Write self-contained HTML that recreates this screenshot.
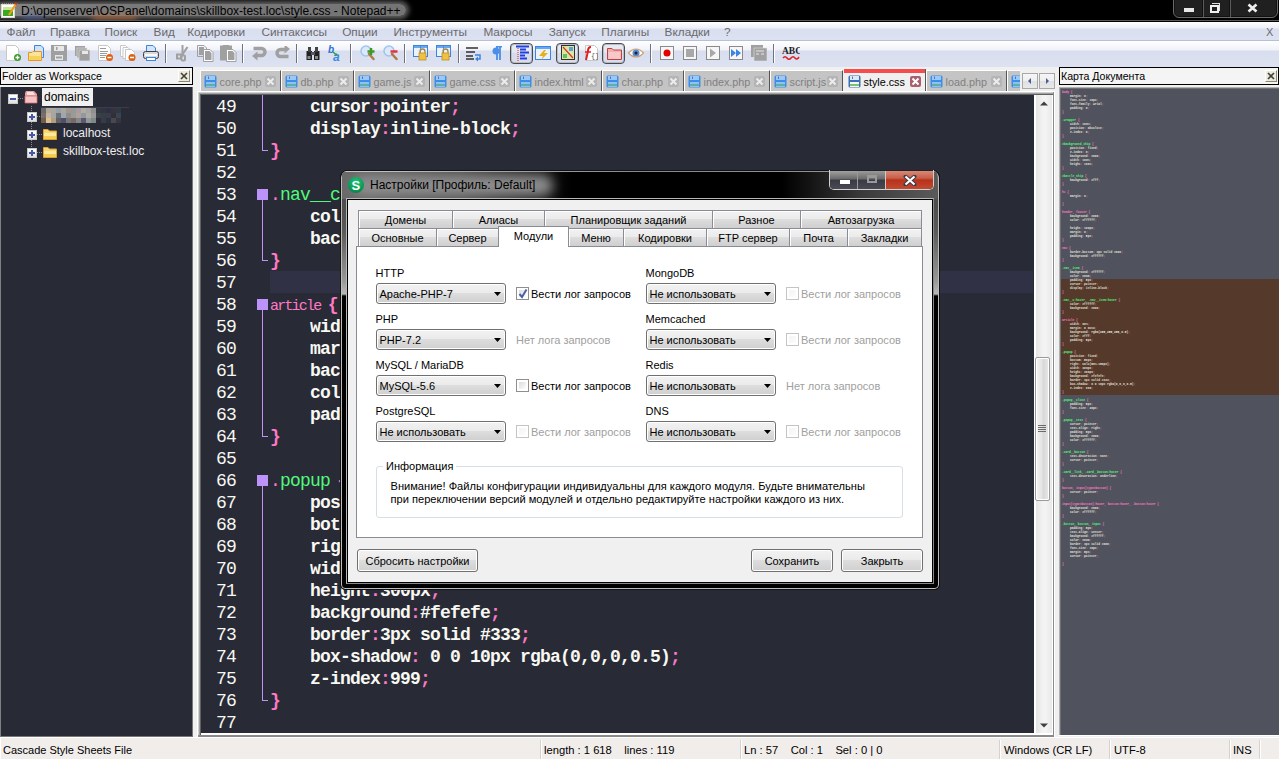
<!DOCTYPE html><html><head><meta charset="utf-8"><style>
*{box-sizing:border-box}
body{margin:0;width:1279px;height:759px;position:relative;overflow:hidden;background:#f0f0f0;font-family:"Liberation Sans",sans-serif;font-size:11px;color:#000}
.a{position:absolute}
.t{position:absolute;white-space:nowrap;line-height:1}
.code{font-family:"Liberation Mono",monospace;font-size:18px;letter-spacing:-0.8px;font-weight:bold;color:#f8f8f2;white-space:pre;line-height:22px}
.ln{font-family:"Liberation Mono",monospace;font-size:18px;letter-spacing:-0.8px;color:#f8f8f2;white-space:pre;line-height:22px;text-align:right}
.pk{color:#ff79c6}
.pn{color:#ff79c6;font-weight:normal}
.gr{color:#50fa7b;font-weight:normal}
.cr{font-size:15px;letter-spacing:-1.8px;font-weight:normal;color:#ff79c6;line-height:0}
.dm{font-family:"Liberation Mono",monospace;font-size:2.95px;line-height:4px;white-space:pre;color:#e0e0d8;font-weight:bold;tab-size:8px;-moz-tab-size:8px}
.dm i{font-style:normal;color:#ff79c6}
.dm b{color:#50fa7b}
.tab{position:absolute;top:70px;height:21px;border-left:1px solid #fff;border-top:1px solid #fff;border-right:1px solid #555;background:#c4c4c4}
.fl{position:absolute;width:13px;height:13px;border-radius:2px;background:#3c8ee8}

</style></head><body>
<div class="a" style="left:0;top:0;width:1279px;height:22px;background:#000"></div>
<div class="a" style="left:0;top:20px;width:1279px;height:1px;background:#5a5a5a"></div>
<div class="a" style="left:0;top:0;width:1279px;height:20px;overflow:hidden"><div class="a" style="left:-4px;top:4px;width:410px;height:12px;border-radius:6px;background:linear-gradient(90deg,#888 0,#7a7a7a 60px,#747474 400px);box-shadow:0 0 5px 3px #626262"></div><div class="a" style="left:22px;top:15px;width:22px;height:6px;background:#5060a0;filter:blur(3px);opacity:.7"></div><div class="a" style="left:92px;top:15px;width:45px;height:6px;background:#c07040;filter:blur(3px);opacity:.7"></div></div>
<div class="t" style="left:21px;top:5px;font-size:12px;color:#000">D:\openserver\OSPanel\domains\skillbox-test.loc\style.css - Notepad++</div>
<div class="a" style="left:0;top:22px;width:1279px;height:19px;background:linear-gradient(#ffffff 0,#eef0f8 6px,#dadff0 7px,#dde2f2 18px)"></div>
<div class="a" style="left:0;top:40px;width:1279px;height:1px;background:#b9bfd3"></div>
<div class="t" style="left:6.5px;top:26.5px;font-size:11.8px;color:#6a6a6a">Файл</div>
<div class="t" style="left:49.9px;top:26.5px;font-size:11.8px;color:#6a6a6a">Правка</div>
<div class="t" style="left:104.6px;top:26.5px;font-size:11.8px;color:#6a6a6a">Поиск</div>
<div class="t" style="left:153.6px;top:26.5px;font-size:11.8px;color:#6a6a6a">Вид</div>
<div class="t" style="left:187.2px;top:26.5px;font-size:11.8px;color:#6a6a6a">Кодировки</div>
<div class="t" style="left:261.4px;top:26.5px;font-size:11.8px;color:#6a6a6a">Синтаксисы</div>
<div class="t" style="left:342.2px;top:26.5px;font-size:11.8px;color:#6a6a6a">Опции</div>
<div class="t" style="left:393.4px;top:26.5px;font-size:11.8px;color:#6a6a6a">Инструменты</div>
<div class="t" style="left:483.4px;top:26.5px;font-size:11.8px;color:#6a6a6a">Макросы</div>
<div class="t" style="left:548.7px;top:26.5px;font-size:11.8px;color:#6a6a6a">Запуск</div>
<div class="t" style="left:601.3px;top:26.5px;font-size:11.8px;color:#6a6a6a">Плагины</div>
<div class="t" style="left:664.6px;top:26.5px;font-size:11.8px;color:#6a6a6a">Вкладки</div>
<div class="t" style="left:724px;top:26.5px;font-size:11.8px;color:#6a6a6a">?</div>
<div class="t" style="left:1266px;top:27px;font-size:11px;color:#6d6d6d">X</div>
<div class="a" style="left:0;top:41px;width:1279px;height:26px;background:linear-gradient(#ffffff 0,#f0f2f8 9px,#d9deef 10px,#dde2f2 25px)"></div>
<svg class="a" style="left:6px;top:45px" width="16" height="16" viewBox="0 0 16 16"><path d="M0.5 0.5 H9.5 L12.5 3.5 V15.5 H0.5 Z" fill="#fff" stroke="#c8c8c8"/><circle cx="11.5" cy="12.5" r="3.5" fill="#3a9a2a"/><path d="M11.5 10.5 V14.5 M9.5 12.5 H13.5" stroke="#fff" stroke-width="1.4"/></svg>
<svg class="a" style="left:28px;top:45px" width="16" height="16" viewBox="0 0 16 16"><path d="M6.5 0.5 H13 L15.5 3 V12.5 H6.5 Z" fill="#cfe2fb" stroke="#3c84e0"/><path d="M0.5 7.5 H4 L5 6.5 H13.5 V15.5 H0.5 Z" fill="#fbe49a" stroke="#e8961e"/><rect x="1.5" y="11" width="11" height="4" fill="#f6d25a"/></svg>
<svg class="a" style="left:51px;top:45px" width="16" height="16" viewBox="0 0 16 16"><rect x="0" y="0" width="16" height="16" fill="#a0a0a0"/><rect x="3" y="1" width="10" height="5" fill="#e8e8e8"/><rect x="5" y="2" width="1.5" height="3" fill="#a0a0a0"/><rect x="4" y="10" width="8" height="5" fill="#e8e8e8"/><rect x="5" y="11.5" width="6" height="2" fill="#a0a0a0"/></svg>
<svg class="a" style="left:75px;top:45px" width="16" height="16" viewBox="0 0 16 16"><rect x="0" y="1" width="10" height="10" fill="#a0a0a0"/><rect x="2" y="3" width="10" height="10" fill="#a0a0a0" stroke="#e0e0e0" stroke-width="0.7"/><rect x="4" y="5" width="11" height="11" fill="#a0a0a0" stroke="#e0e0e0" stroke-width="0.7"/><rect x="7" y="6" width="6" height="3" fill="#e8e8e8"/></svg>
<svg class="a" style="left:98px;top:45px" width="16" height="16" viewBox="0 0 16 16"><path d="M0.5 0.5 H9.5 L12.5 3.5 V15.5 H0.5 Z" fill="#fff" stroke="#c8c8c8"/><path d="M2 3.5 H8 M2 6.5 H10 M2 8.5 H9 M2 10.5 H8 M2 12.5 H7" stroke="#9a9a9a" stroke-width="1"/><circle cx="11.5" cy="12.5" r="3.5" fill="#e06010"/><path d="M9.5 12.5 H13.5" stroke="#fff" stroke-width="1.5"/></svg>
<svg class="a" style="left:120px;top:45px" width="16" height="16" viewBox="0 0 16 16"><path d="M0.5 0.5 H5.5 L8.5 3.5 V11.5 H0.5 Z" fill="#fff" stroke="#c8c8c8"/><path d="M3.0 2.5 H8.0 L11.0 5.5 V13.5 H3.0 Z" fill="#fff" stroke="#c8c8c8"/><path d="M5.5 4.5 H11.5 L14.5 7.5 V15.5 H5.5 Z" fill="#fff" stroke="#c8c8c8"/><circle cx="12" cy="12.5" r="3.5" fill="#e06010"/><path d="M10 12.5 H14" stroke="#fff" stroke-width="1.5"/></svg>
<svg class="a" style="left:143px;top:45px" width="16" height="16" viewBox="0 0 16 16"><path d="M3.5 0.5 H10 L12.5 3 V8 H3.5 Z" fill="#d4e6fb" stroke="#3c84e0"/><rect x="0.5" y="6.5" width="15" height="7" rx="2" fill="#d8d8d8" stroke="#404040"/><rect x="2" y="9" width="12" height="2" fill="#f8f8f8"/><rect x="3.5" y="12.5" width="9" height="3" fill="#fff" stroke="#3c84e0"/></svg>
<svg class="a" style="left:176px;top:45px" width="13" height="17" viewBox="0 0 13 17"><path d="M6.5 0 V10" stroke="#a0a0a0" stroke-width="2"/><path d="M11.5 2 L6 10" stroke="#a0a0a0" stroke-width="2.2"/><rect x="1" y="9.5" width="4" height="4" fill="none" stroke="#a0a0a0" stroke-width="2"/><rect x="5.5" y="10.5" width="3.5" height="5" rx="1" fill="none" stroke="#a0a0a0" stroke-width="2"/></svg>
<svg class="a" style="left:197px;top:45px" width="17" height="17" viewBox="0 0 17 17"><path d="M0.5 0.5 H7 L9.5 3 V11.5 H0.5 Z" fill="none" stroke="#a0a0a0"/><rect x="2" y="2" width="5" height="8" fill="#a0a0a0"/><path d="M6.5 4.5 H13 L16 7.5 V16.5 H6.5 Z" fill="#fff" stroke="#a0a0a0"/><path d="M8 6 H12.5 L14.5 8 V15 H8 Z" fill="#a0a0a0"/></svg>
<svg class="a" style="left:220px;top:45px" width="17" height="17" viewBox="0 0 17 17"><rect x="0" y="0.5" width="12" height="15" fill="#a0a0a0"/><rect x="3" y="0" width="6" height="2" fill="#a0a0a0"/><path d="M6.5 4.5 H13 L16 7.5 V16.5 H6.5 Z" fill="#fff" stroke="#a0a0a0"/><path d="M8 6 H12.5 L14.5 8 V15 H8 Z" fill="#a0a0a0"/></svg>
<svg class="a" style="left:252px;top:46px" width="15" height="16" viewBox="0 0 15 16"><path d="M1.5 2.5 H9.5 A3.5 3.5 0 0 1 9.5 9.5 H4" stroke="#a0a0a0" stroke-width="3.4" fill="none"/><path d="M0 10 L5.5 5.5 V14.5 Z" fill="#a0a0a0"/></svg>
<svg class="a" style="left:275px;top:46px" width="15" height="16" viewBox="0 0 15 16"><path d="M13.5 10.5 H5.5 A3.5 3.5 0 0 1 5.5 3.5 H11" stroke="#a0a0a0" stroke-width="3.4" fill="none"/><path d="M15 3 L9.5 -1.5 V7.5 Z" fill="#a0a0a0"/></svg>
<svg class="a" style="left:306px;top:46px" width="14" height="15" viewBox="0 0 14 15"><rect x="0.5" y="5" width="5.5" height="9" fill="#222"/><rect x="8" y="5" width="5.5" height="9" fill="#222"/><rect x="2" y="1" width="3" height="5" fill="#444"/><rect x="9" y="1" width="3" height="5" fill="#444"/><rect x="5" y="6" width="4" height="3" fill="#556"/><rect x="1.5" y="10" width="3" height="3" fill="#8a8a8a"/><rect x="9" y="10" width="3" height="3" fill="#8a8a8a"/></svg>
<svg class="a" style="left:328px;top:44px" width="17" height="18" viewBox="0 0 17 18"><text x="0" y="9" font-family="Liberation Sans" font-style="italic" font-weight="bold" font-size="10" fill="#2a70d8">b</text><text x="5" y="16.5" font-family="Liberation Sans" font-style="italic" font-weight="bold" font-size="12" fill="#3a88e8">a</text><path d="M5 8 L8.5 11" stroke="#30a040" stroke-width="1.6"/><path d="M9.5 12 L6.5 11.5 L8.5 9 Z" fill="#30a040"/></svg>
<svg class="a" style="left:360px;top:45px" width="16" height="16" viewBox="0 0 16 16"><circle cx="6" cy="6" r="5" fill="#dbe9fb" stroke="#9fc4ee" stroke-width="1.5"/><path d="M9 9 L13.5 14" stroke="#b07a40" stroke-width="2.5" stroke-linecap="round"/><path d="M11 3 V10 M7.5 6.5 H14.5" stroke="#3a9a2a" stroke-width="2.5"/></svg>
<svg class="a" style="left:383px;top:45px" width="16" height="16" viewBox="0 0 16 16"><circle cx="6" cy="6" r="5" fill="#dbe9fb" stroke="#9fc4ee" stroke-width="1.5"/><path d="M9 9 L13.5 14" stroke="#b07a40" stroke-width="2.5" stroke-linecap="round"/><path d="M7.5 6.5 H14.5" stroke="#e83040" stroke-width="2.5"/></svg>
<svg class="a" style="left:413px;top:45px" width="16" height="16" viewBox="0 0 16 16"><rect x="0.5" y="0.5" width="14" height="11" fill="#eaf2fc" stroke="#3c84e0"/><rect x="1" y="1" width="13" height="2" fill="#6aa8ee"/><path d="M7.5 1 V11" stroke="#3c84e0" stroke-width="0.8"/><path d="M7 8 V6.5 A2.5 2.5 0 0 1 12 6.5 V8" stroke="#a08850" stroke-width="1.3" fill="none"/><rect x="6" y="8" width="7" height="7" fill="#f0c040" stroke="#c09020" stroke-width="0.8"/></svg>
<svg class="a" style="left:436px;top:45px" width="16" height="16" viewBox="0 0 16 16"><rect x="0.5" y="0.5" width="14" height="11" fill="#eaf2fc" stroke="#3c84e0"/><rect x="1" y="1" width="13" height="2" fill="#6aa8ee"/><path d="M7.5 1 V11" stroke="#3c84e0" stroke-width="0.8"/><path d="M7 8 V6.5 A2.5 2.5 0 0 1 12 6.5 V8" stroke="#a08850" stroke-width="1.3" fill="none"/><rect x="6" y="8" width="7" height="7" fill="#f0c040" stroke="#c09020" stroke-width="0.8"/></svg>
<svg class="a" style="left:466px;top:46px" width="16" height="16" viewBox="0 0 16 16"><path d="M0 2 H12 M0 6 H9 M0 10 H7 M0 13 H8" stroke="#303030" stroke-width="1.5"/><path d="M9 9 H14 V13 H10" stroke="#3c84e0" stroke-width="1.5" fill="none"/><path d="M9 13 L12 10.5 V15.5 Z" fill="#3c84e0"/></svg>
<svg class="a" style="left:492px;top:46px" width="11" height="15" viewBox="0 0 11 15"><path d="M4 0.5 H10 M5 1 V14 M8 1 V14" stroke="#4a8ee8" stroke-width="1.8"/><circle cx="4" cy="5" r="3.5" fill="#4a8ee8"/></svg>
<div class="a" style="left:510px;top:43px;width:23px;height:21px;border:1px solid #4a4a4a;border-radius:4px;background:linear-gradient(#e8ebf4 0,#e2e6f0 45%,#d6dbec 50%,#d9deef 100%);box-shadow:inset 0 0 0 1px #b8bcc8"></div>
<div class="a" style="left:556px;top:43px;width:23px;height:21px;border:1px solid #4a4a4a;border-radius:4px;background:linear-gradient(#e8ebf4 0,#e2e6f0 45%,#d6dbec 50%,#d9deef 100%);box-shadow:inset 0 0 0 1px #b8bcc8"></div>
<div class="a" style="left:602px;top:43px;width:23px;height:21px;border:1px solid #4a4a4a;border-radius:4px;background:linear-gradient(#e8ebf4 0,#e2e6f0 45%,#d6dbec 50%,#d9deef 100%);box-shadow:inset 0 0 0 1px #b8bcc8"></div>
<svg class="a" style="left:516px;top:45px" width="14" height="16" viewBox="0 0 14 16"><path d="M2 1 V16" stroke="#e02020" stroke-width="1" stroke-dasharray="1 1"/><path d="M0 1.5 H13 M4 4.5 H10 M4 7.5 H13 M4 10.5 H9 M4 13.5 H11" stroke="#2040e0" stroke-width="1.8"/></svg>
<svg class="a" style="left:535px;top:45px" width="16" height="16" viewBox="0 0 16 16"><rect x="0.5" y="1.5" width="15" height="13" fill="#eaf2fc" stroke="#3c84e0"/><rect x="1" y="2" width="14" height="2" fill="#6aa8ee"/><path d="M9 5 L4 11 H8 L6 15 L13 8 H9 L11 5 Z" fill="#e8b020"/></svg>
<svg class="a" style="left:561px;top:45px" width="14" height="16" viewBox="0 0 14 16"><rect x="0.5" y="0.5" width="13" height="14" fill="#d8e8a0" stroke="#303030"/><path d="M2 2 L12 13" stroke="#e03030" stroke-width="1.2"/><rect x="8" y="2" width="4" height="4" fill="#60a0e0"/><rect x="2" y="9" width="4" height="4" fill="#60c060"/></svg>
<svg class="a" style="left:582px;top:45px" width="16" height="16" viewBox="0 0 16 16"><path d="M3.5 0.5 H12.5 L15.5 3.5 V15.5 H3.5 Z" fill="#fff" stroke="#c8c8c8"/><path d="M9 2 Q6 2 6 6 L4 15" stroke="#e02020" stroke-width="2" fill="none"/><path d="M3 7 H9" stroke="#e02020" stroke-width="1.5"/><text x="9" y="13" font-size="7" font-family="Liberation Mono" fill="#555">{}</text></svg>
<svg class="a" style="left:607px;top:46px" width="15" height="15" viewBox="0 0 15 15"><path d="M0.5 2.5 H5 L6.5 4 H14.5 V13.5 H0.5 Z" fill="#f0b0b0" stroke="#c04040"/><rect x="1.5" y="6" width="12" height="7" fill="#f8c8c8"/></svg>
<svg class="a" style="left:628px;top:46px" width="16" height="14" viewBox="0 0 16 14"><path d="M0.5 7 Q8 -1 15.5 7 Q8 15 0.5 7 Z" fill="#fff" stroke="#d0a070" stroke-width="1.2"/><circle cx="8" cy="7" r="3.5" fill="#5a8ac8"/><circle cx="8" cy="7" r="1.5" fill="#102040"/></svg>
<svg class="a" style="left:660px;top:46px" width="14" height="14" viewBox="0 0 14 14"><rect x="0.5" y="0.5" width="13" height="13" fill="#f6f6f6" stroke="#8a8a8a"/><circle cx="7" cy="7" r="3.5" fill="#e00000"/></svg>
<svg class="a" style="left:683px;top:46px" width="14" height="14" viewBox="0 0 14 14"><rect x="0.5" y="0.5" width="13" height="13" fill="#f6f6f6" stroke="#8a8a8a"/><rect x="3" y="3" width="8" height="8" fill="#a8a8a8"/></svg>
<svg class="a" style="left:706px;top:46px" width="14" height="14" viewBox="0 0 14 14"><rect x="0.5" y="0.5" width="13" height="13" fill="#f6f6f6" stroke="#8a8a8a"/><path d="M4 2.5 L10 7 L4 11.5 Z" fill="#a8a8a8"/></svg>
<svg class="a" style="left:729px;top:46px" width="14" height="14" viewBox="0 0 14 14"><rect x="0.5" y="0.5" width="13" height="13" fill="#f6f6f6" stroke="#8a8a8a"/><path d="M2 3 L7 7 L2 11 Z M7 3 L12 7 L7 11 Z" fill="#3c84e0"/></svg>
<svg class="a" style="left:751px;top:45px" width="16" height="16" viewBox="0 0 16 16"><rect x="0" y="0" width="12" height="12" fill="#a0a0a0"/><rect x="3" y="3" width="13" height="13" fill="#a0a0a0" stroke="#e0e0e0" stroke-width="0.6"/><path d="M5 6 H13 M5 9 H8 M10 9 H13" stroke="#e8e8e8" stroke-width="1"/></svg>
<svg class="a" style="left:782px;top:45px" width="18" height="16" viewBox="0 0 18 16"><text x="0" y="9" font-family="Liberation Serif" font-weight="bold" font-size="9.5" fill="#202020">ABC</text><path d="M1 13 Q3 10.5 5 13 T9 13 T13 13 T17 12" stroke="#e02020" stroke-width="1.6" fill="none"/></svg>
<div class="a" style="left:165px;top:44px;width:1px;height:19px;background:#6e7280"></div>
<div class="a" style="left:166px;top:44px;width:1px;height:19px;background:#fff"></div>
<div class="a" style="left:242px;top:44px;width:1px;height:19px;background:#6e7280"></div>
<div class="a" style="left:243px;top:44px;width:1px;height:19px;background:#fff"></div>
<div class="a" style="left:296px;top:44px;width:1px;height:19px;background:#6e7280"></div>
<div class="a" style="left:297px;top:44px;width:1px;height:19px;background:#fff"></div>
<div class="a" style="left:350px;top:44px;width:1px;height:19px;background:#6e7280"></div>
<div class="a" style="left:351px;top:44px;width:1px;height:19px;background:#fff"></div>
<div class="a" style="left:404px;top:44px;width:1px;height:19px;background:#6e7280"></div>
<div class="a" style="left:405px;top:44px;width:1px;height:19px;background:#fff"></div>
<div class="a" style="left:458px;top:44px;width:1px;height:19px;background:#6e7280"></div>
<div class="a" style="left:459px;top:44px;width:1px;height:19px;background:#fff"></div>
<div class="a" style="left:650px;top:44px;width:1px;height:19px;background:#6e7280"></div>
<div class="a" style="left:651px;top:44px;width:1px;height:19px;background:#fff"></div>
<div class="a" style="left:773px;top:44px;width:1px;height:19px;background:#6e7280"></div>
<div class="a" style="left:774px;top:44px;width:1px;height:19px;background:#fff"></div>
<div class="a" style="left:0;top:67px;width:193px;height:18px;border:1px solid #000;background:#f4f4f4"></div>
<div class="t" style="left:2px;top:71px;font-size:10.6px;color:#000">Folder as Workspace</div>
<div class="a" style="left:178px;top:70px;width:12px;height:12px;background:#ece9d8;border:1px solid;border-color:#fff #8a8670 #8a8670 #fff"></div>
<svg class="a" style="left:178px;top:70px" width="12" height="12"><path d="M3 3 L9 9 M9 3 L3 9" stroke="#404040" stroke-width="1.6"/></svg>
<div class="a" style="left:0;top:87px;width:193px;height:650px;background:#282a36;border-left:1px solid #808080;border-right:1px solid #777;border-bottom:1px solid #777"></div>
<div class="a" style="left:8px;top:94px;width:10px;height:10px;border:1px solid #c8c8c8;background:linear-gradient(#ffffff,#e0e0e0)"></div>
<div class="a" style="left:10px;top:98px;width:6px;height:1.5px;background:#4858a8"></div>
<div class="a" style="left:18px;top:98px;width:6px;height:1px;background:repeating-linear-gradient(90deg,#8a8a8a 0 1px,transparent 1px 2px)"></div>
<svg class="a" style="left:24px;top:90px" width="14" height="14"><path d="M2 1 H10 L13 4 V13 H1 V3 Z" fill="#e8a0a0"/><path d="M1 6 H13 V13 H1 Z" fill="#f4c4c4" stroke="#d87070" stroke-width="0.8"/><path d="M3 2 H9 L11 5 H3 Z" fill="#fbe0e0"/></svg>
<div class="a" style="left:42px;top:88px;width:51px;height:18px;background:#f0f0f0"></div>
<div class="t" style="left:44px;top:91px;font-size:12px;color:#000">domains</div>
<div class="a" style="left:31px;top:106px;width:1px;height:52px;background:repeating-linear-gradient(#8a8a8a 0 1px,transparent 1px 2px)"></div>
<div class="a" style="left:41px;top:108px;width:5px;height:5px;background:#6a6a6a"></div>
<div class="a" style="left:46px;top:108px;width:5px;height:5px;background:#b0a898"></div>
<div class="a" style="left:51px;top:108px;width:5px;height:5px;background:#a8a8a0"></div>
<div class="a" style="left:56px;top:108px;width:5px;height:5px;background:#9aa0a8"></div>
<div class="a" style="left:61px;top:108px;width:5px;height:5px;background:#a8a8a0"></div>
<div class="a" style="left:66px;top:108px;width:5px;height:5px;background:#a09890"></div>
<div class="a" style="left:71px;top:108px;width:5px;height:5px;background:#989898"></div>
<div class="a" style="left:76px;top:108px;width:5px;height:5px;background:#a89ca0"></div>
<div class="a" style="left:81px;top:108px;width:5px;height:5px;background:#b0aea4"></div>
<div class="a" style="left:86px;top:108px;width:5px;height:5px;background:#a8a4a0"></div>
<div class="a" style="left:91px;top:108px;width:5px;height:5px;background:#909090"></div>
<div class="a" style="left:96px;top:108px;width:5px;height:5px;background:#343540"></div>
<div class="a" style="left:101px;top:108px;width:5px;height:5px;background:#303440"></div>
<div class="a" style="left:106px;top:108px;width:5px;height:5px;background:#2c3040"></div>
<div class="a" style="left:111px;top:108px;width:5px;height:5px;background:#343440"></div>
<div class="a" style="left:116px;top:108px;width:5px;height:5px;background:#303844"></div>
<div class="a" style="left:41px;top:113px;width:5px;height:5px;background:#787068"></div>
<div class="a" style="left:46px;top:113px;width:5px;height:5px;background:#c4b4a0"></div>
<div class="a" style="left:51px;top:113px;width:5px;height:5px;background:#a4a8a4"></div>
<div class="a" style="left:56px;top:113px;width:5px;height:5px;background:#707078"></div>
<div class="a" style="left:61px;top:113px;width:5px;height:5px;background:#9ca8b0"></div>
<div class="a" style="left:66px;top:113px;width:5px;height:5px;background:#908c8a"></div>
<div class="a" style="left:71px;top:113px;width:5px;height:5px;background:#9a9a9a"></div>
<div class="a" style="left:76px;top:113px;width:5px;height:5px;background:#b0a098"></div>
<div class="a" style="left:81px;top:113px;width:5px;height:5px;background:#9098a0"></div>
<div class="a" style="left:86px;top:113px;width:5px;height:5px;background:#acaca4"></div>
<div class="a" style="left:91px;top:113px;width:5px;height:5px;background:#989898"></div>
<div class="a" style="left:96px;top:113px;width:5px;height:5px;background:#384048"></div>
<div class="a" style="left:101px;top:113px;width:5px;height:5px;background:#3a3c44"></div>
<div class="a" style="left:106px;top:113px;width:5px;height:5px;background:#383c48"></div>
<div class="a" style="left:111px;top:113px;width:5px;height:5px;background:#342e38"></div>
<div class="a" style="left:116px;top:113px;width:5px;height:5px;background:#384450"></div>
<div class="a" style="left:41px;top:118px;width:5px;height:5px;background:#706048"></div>
<div class="a" style="left:46px;top:118px;width:5px;height:5px;background:#e0c090"></div>
<div class="a" style="left:51px;top:118px;width:5px;height:5px;background:#b0a080"></div>
<div class="a" style="left:56px;top:118px;width:5px;height:5px;background:#606068"></div>
<div class="a" style="left:61px;top:118px;width:5px;height:5px;background:#50506a"></div>
<div class="a" style="left:66px;top:118px;width:5px;height:5px;background:#787878"></div>
<div class="a" style="left:71px;top:118px;width:5px;height:5px;background:#786868"></div>
<div class="a" style="left:76px;top:118px;width:5px;height:5px;background:#80888a"></div>
<div class="a" style="left:81px;top:118px;width:5px;height:5px;background:#605870"></div>
<div class="a" style="left:86px;top:118px;width:5px;height:5px;background:#909898"></div>
<div class="a" style="left:91px;top:118px;width:5px;height:5px;background:#808888"></div>
<div class="a" style="left:96px;top:118px;width:5px;height:5px;background:#302a38"></div>
<div class="a" style="left:101px;top:118px;width:5px;height:5px;background:#343c48"></div>
<div class="a" style="left:106px;top:118px;width:5px;height:5px;background:#2c3040"></div>
<div class="a" style="left:111px;top:118px;width:5px;height:5px;background:#484850"></div>
<div class="a" style="left:116px;top:118px;width:5px;height:5px;background:#3a3440"></div>
<div class="a" style="left:41px;top:107px;width:88px;height:1px;background:#3a3c48"></div>
<div class="a" style="left:27px;top:112px;width:10px;height:10px;border:1px solid #c8c8c8;background:linear-gradient(#ffffff,#e0e0e0)"></div>
<div class="a" style="left:29px;top:116px;width:6px;height:1.5px;background:#4858a8"></div>
<div class="a" style="left:31.25px;top:114px;width:1.5px;height:6px;background:#4858a8"></div>
<div class="a" style="left:37px;top:116px;width:5px;height:1px;background:repeating-linear-gradient(90deg,#8a8a8a 0 1px,transparent 1px 2px)"></div>
<div class="a" style="left:27px;top:130px;width:10px;height:10px;border:1px solid #c8c8c8;background:linear-gradient(#ffffff,#e0e0e0)"></div>
<div class="a" style="left:29px;top:134px;width:6px;height:1.5px;background:#4858a8"></div>
<div class="a" style="left:31.25px;top:132px;width:1.5px;height:6px;background:#4858a8"></div>
<div class="a" style="left:37px;top:134px;width:5px;height:1px;background:repeating-linear-gradient(90deg,#8a8a8a 0 1px,transparent 1px 2px)"></div>
<svg class="a" style="left:43px;top:128px" width="15" height="13"><path d="M0.5 1.5 H5 L6.5 3 H13.5 V11.5 H0.5 Z" fill="#f6d870" stroke="#e0a030" stroke-width="1"/><path d="M1 5 H13 V11 H1 Z" fill="#fce9a0"/><path d="M1 8 H13 V11 H1 Z" fill="#f4cc50"/></svg>
<div class="t" style="left:63px;top:127px;font-size:12px;color:#eeeeee">localhost</div>
<div class="a" style="left:27px;top:148px;width:10px;height:10px;border:1px solid #c8c8c8;background:linear-gradient(#ffffff,#e0e0e0)"></div>
<div class="a" style="left:29px;top:152px;width:6px;height:1.5px;background:#4858a8"></div>
<div class="a" style="left:31.25px;top:150px;width:1.5px;height:6px;background:#4858a8"></div>
<div class="a" style="left:37px;top:152px;width:5px;height:1px;background:repeating-linear-gradient(90deg,#8a8a8a 0 1px,transparent 1px 2px)"></div>
<svg class="a" style="left:43px;top:146px" width="15" height="13"><path d="M0.5 1.5 H5 L6.5 3 H13.5 V11.5 H0.5 Z" fill="#f6d870" stroke="#e0a030" stroke-width="1"/><path d="M1 5 H13 V11 H1 Z" fill="#fce9a0"/><path d="M1 8 H13 V11 H1 Z" fill="#f4cc50"/></svg>
<div class="t" style="left:63px;top:145px;font-size:12px;color:#eeeeee">skillbox-test.loc</div>
<div class="tab" style="left:200px;width:81px"></div>
<svg class="a" style="left:204px;top:75px" width="13" height="13" viewBox="0 0 13 13"><rect x="0.5" y="0.5" width="12" height="12" rx="1.5" fill="#3c8ee8"/><rect x="2" y="1" width="9" height="4" fill="#9cc8f7"/><rect x="4" y="1.5" width="1" height="2.5" fill="#3c7ad8"/><rect x="2" y="7" width="9" height="5" fill="#8ec0f4"/><rect x="2" y="9" width="9" height="2" fill="#60b0a0"/></svg>
<div class="t" style="left:219.5px;top:77px;font-size:10.8px;color:#808080">core.php</div>
<div class="a" style="left:265px;top:76px;width:11px;height:11px;border-radius:2px;background:#b4b4b4"></div>
<svg class="a" style="left:265px;top:76px" width="11" height="11"><path d="M2.5 2.5 L8.5 8.5 M8.5 2.5 L2.5 8.5" stroke="#ececec" stroke-width="2"/></svg>
<div class="tab" style="left:281px;width:73px"></div>
<svg class="a" style="left:285px;top:75px" width="13" height="13" viewBox="0 0 13 13"><rect x="0.5" y="0.5" width="12" height="12" rx="1.5" fill="#3c8ee8"/><rect x="2" y="1" width="9" height="4" fill="#9cc8f7"/><rect x="4" y="1.5" width="1" height="2.5" fill="#3c7ad8"/><rect x="2" y="7" width="9" height="5" fill="#8ec0f4"/><rect x="2" y="9" width="9" height="2" fill="#60b0a0"/></svg>
<div class="t" style="left:300.5px;top:77px;font-size:10.8px;color:#808080">db.php</div>
<div class="a" style="left:338px;top:76px;width:11px;height:11px;border-radius:2px;background:#b4b4b4"></div>
<svg class="a" style="left:338px;top:76px" width="11" height="11"><path d="M2.5 2.5 L8.5 8.5 M8.5 2.5 L2.5 8.5" stroke="#ececec" stroke-width="2"/></svg>
<div class="tab" style="left:354px;width:76px"></div>
<svg class="a" style="left:358px;top:75px" width="13" height="13" viewBox="0 0 13 13"><rect x="0.5" y="0.5" width="12" height="12" rx="1.5" fill="#3c8ee8"/><rect x="2" y="1" width="9" height="4" fill="#9cc8f7"/><rect x="4" y="1.5" width="1" height="2.5" fill="#3c7ad8"/><rect x="2" y="7" width="9" height="5" fill="#8ec0f4"/><rect x="2" y="9" width="9" height="2" fill="#60b0a0"/></svg>
<div class="t" style="left:373.5px;top:77px;font-size:10.8px;color:#808080">game.js</div>
<div class="a" style="left:414px;top:76px;width:11px;height:11px;border-radius:2px;background:#b4b4b4"></div>
<svg class="a" style="left:414px;top:76px" width="11" height="11"><path d="M2.5 2.5 L8.5 8.5 M8.5 2.5 L2.5 8.5" stroke="#ececec" stroke-width="2"/></svg>
<div class="tab" style="left:430px;width:85px"></div>
<svg class="a" style="left:434px;top:75px" width="13" height="13" viewBox="0 0 13 13"><rect x="0.5" y="0.5" width="12" height="12" rx="1.5" fill="#3c8ee8"/><rect x="2" y="1" width="9" height="4" fill="#9cc8f7"/><rect x="4" y="1.5" width="1" height="2.5" fill="#3c7ad8"/><rect x="2" y="7" width="9" height="5" fill="#8ec0f4"/><rect x="2" y="9" width="9" height="2" fill="#60b0a0"/></svg>
<div class="t" style="left:449.5px;top:77px;font-size:10.8px;color:#808080">game.css</div>
<div class="a" style="left:499px;top:76px;width:11px;height:11px;border-radius:2px;background:#b4b4b4"></div>
<svg class="a" style="left:499px;top:76px" width="11" height="11"><path d="M2.5 2.5 L8.5 8.5 M8.5 2.5 L2.5 8.5" stroke="#ececec" stroke-width="2"/></svg>
<div class="tab" style="left:515px;width:87px"></div>
<svg class="a" style="left:519px;top:75px" width="13" height="13" viewBox="0 0 13 13"><rect x="0.5" y="0.5" width="12" height="12" rx="1.5" fill="#3c8ee8"/><rect x="2" y="1" width="9" height="4" fill="#9cc8f7"/><rect x="4" y="1.5" width="1" height="2.5" fill="#3c7ad8"/><rect x="2" y="7" width="9" height="5" fill="#8ec0f4"/><rect x="2" y="9" width="9" height="2" fill="#60b0a0"/></svg>
<div class="t" style="left:534.5px;top:77px;font-size:10.8px;color:#808080">index.html</div>
<div class="a" style="left:586px;top:76px;width:11px;height:11px;border-radius:2px;background:#b4b4b4"></div>
<svg class="a" style="left:586px;top:76px" width="11" height="11"><path d="M2.5 2.5 L8.5 8.5 M8.5 2.5 L2.5 8.5" stroke="#ececec" stroke-width="2"/></svg>
<div class="tab" style="left:602px;width:82px"></div>
<svg class="a" style="left:606px;top:75px" width="13" height="13" viewBox="0 0 13 13"><rect x="0.5" y="0.5" width="12" height="12" rx="1.5" fill="#3c8ee8"/><rect x="2" y="1" width="9" height="4" fill="#9cc8f7"/><rect x="4" y="1.5" width="1" height="2.5" fill="#3c7ad8"/><rect x="2" y="7" width="9" height="5" fill="#8ec0f4"/><rect x="2" y="9" width="9" height="2" fill="#60b0a0"/></svg>
<div class="t" style="left:621.5px;top:77px;font-size:10.8px;color:#808080">char.php</div>
<div class="a" style="left:668px;top:76px;width:11px;height:11px;border-radius:2px;background:#b4b4b4"></div>
<svg class="a" style="left:668px;top:76px" width="11" height="11"><path d="M2.5 2.5 L8.5 8.5 M8.5 2.5 L2.5 8.5" stroke="#ececec" stroke-width="2"/></svg>
<div class="tab" style="left:684px;width:86px"></div>
<svg class="a" style="left:688px;top:75px" width="13" height="13" viewBox="0 0 13 13"><rect x="0.5" y="0.5" width="12" height="12" rx="1.5" fill="#3c8ee8"/><rect x="2" y="1" width="9" height="4" fill="#9cc8f7"/><rect x="4" y="1.5" width="1" height="2.5" fill="#3c7ad8"/><rect x="2" y="7" width="9" height="5" fill="#8ec0f4"/><rect x="2" y="9" width="9" height="2" fill="#60b0a0"/></svg>
<div class="t" style="left:703.5px;top:77px;font-size:10.8px;color:#808080">index.php</div>
<div class="a" style="left:754px;top:76px;width:11px;height:11px;border-radius:2px;background:#b4b4b4"></div>
<svg class="a" style="left:754px;top:76px" width="11" height="11"><path d="M2.5 2.5 L8.5 8.5 M8.5 2.5 L2.5 8.5" stroke="#ececec" stroke-width="2"/></svg>
<div class="tab" style="left:770px;width:73px"></div>
<svg class="a" style="left:774px;top:75px" width="13" height="13" viewBox="0 0 13 13"><rect x="0.5" y="0.5" width="12" height="12" rx="1.5" fill="#3c8ee8"/><rect x="2" y="1" width="9" height="4" fill="#9cc8f7"/><rect x="4" y="1.5" width="1" height="2.5" fill="#3c7ad8"/><rect x="2" y="7" width="9" height="5" fill="#8ec0f4"/><rect x="2" y="9" width="9" height="2" fill="#60b0a0"/></svg>
<div class="t" style="left:789.5px;top:77px;font-size:10.8px;color:#808080">script.js</div>
<div class="a" style="left:827px;top:76px;width:11px;height:11px;border-radius:2px;background:#b4b4b4"></div>
<svg class="a" style="left:827px;top:76px" width="11" height="11"><path d="M2.5 2.5 L8.5 8.5 M8.5 2.5 L2.5 8.5" stroke="#ececec" stroke-width="2"/></svg>
<div class="a" style="left:844px;top:69px;width:82px;height:26px;background:#f0f0f0;border-right:1px solid #555"></div>
<div class="a" style="left:844px;top:69px;width:81px;height:4px;background:#f54c4c"></div>
<svg class="a" style="left:848px;top:75px" width="13" height="13" viewBox="0 0 13 13"><rect x="0.5" y="0.5" width="12" height="12" rx="1.5" fill="#3b6fb8"/><rect x="2" y="1" width="9" height="4" fill="#dfe8f5"/><rect x="4" y="1.5" width="1" height="2.5" fill="#3c7ad8"/><rect x="2" y="7" width="9" height="5" fill="#f4f4f4"/><rect x="2" y="9" width="9" height="2" fill="#7cc070"/></svg>
<div class="t" style="left:863.5px;top:77px;font-size:10.8px;color:#000">style.css</div>
<div class="a" style="left:910px;top:76px;width:11px;height:11px;border-radius:2px;background:#a8606e"></div>
<svg class="a" style="left:910px;top:76px" width="11" height="11"><path d="M2.5 2.5 L8.5 8.5 M8.5 2.5 L2.5 8.5" stroke="#fff" stroke-width="2"/></svg>
<div class="tab" style="left:926px;width:81px"></div>
<svg class="a" style="left:930px;top:75px" width="13" height="13" viewBox="0 0 13 13"><rect x="0.5" y="0.5" width="12" height="12" rx="1.5" fill="#3c8ee8"/><rect x="2" y="1" width="9" height="4" fill="#9cc8f7"/><rect x="4" y="1.5" width="1" height="2.5" fill="#3c7ad8"/><rect x="2" y="7" width="9" height="5" fill="#8ec0f4"/><rect x="2" y="9" width="9" height="2" fill="#60b0a0"/></svg>
<div class="t" style="left:945.5px;top:77px;font-size:10.8px;color:#808080">load.php</div>
<div class="a" style="left:991px;top:76px;width:11px;height:11px;border-radius:2px;background:#b4b4b4"></div>
<svg class="a" style="left:991px;top:76px" width="11" height="11"><path d="M2.5 2.5 L8.5 8.5 M8.5 2.5 L2.5 8.5" stroke="#ececec" stroke-width="2"/></svg>
<div class="tab" style="left:1007px;width:34px"></div>
<svg class="a" style="left:1011px;top:75px" width="13" height="13" viewBox="0 0 13 13"><rect x="0.5" y="0.5" width="12" height="12" rx="1.5" fill="#3c8ee8"/><rect x="2" y="1" width="9" height="4" fill="#9cc8f7"/><rect x="4" y="1.5" width="1" height="2.5" fill="#3c7ad8"/><rect x="2" y="7" width="9" height="5" fill="#8ec0f4"/><rect x="2" y="9" width="9" height="2" fill="#60b0a0"/></svg>
<div class="a" style="left:1020px;top:68px;width:39px;height:25px;background:#f0f0f0"></div>
<div class="a" style="left:1022px;top:73px;width:16px;height:16px;border:1px solid #a8a8a8;background:linear-gradient(#f6f6f6 0,#eeeeee 50%,#e0e0e0 51%,#e8e8e8 100%)"></div>
<svg class="a" style="left:1022px;top:73px" width="16" height="16"><path d="M9 5 L6 8 L9 11 Z" fill="#4a5a9a"/></svg>
<div class="a" style="left:1039px;top:73px;width:16px;height:16px;border:1px solid #a8a8a8;background:linear-gradient(#f6f6f6 0,#eeeeee 50%,#e0e0e0 51%,#e8e8e8 100%)"></div>
<svg class="a" style="left:1039px;top:73px" width="16" height="16"><path d="M7 5 L10 8 L7 11 Z" fill="#4a5a9a"/></svg>
<div class="a" style="left:197px;top:91px;width:858px;height:646px;background:#fff"></div>
<div class="a" style="left:198px;top:92px;width:856px;height:645px;background:#fff;border-right:1px solid #8a8a8a;border-bottom:2px solid #8a8a8a;box-shadow:inset 1px 1px 0 #d0d0d0,inset 2px 2px 0 #a0a0a0,inset 3px 3px 0 #606060"></div>
<div class="a" style="left:201px;top:95px;width:833px;height:638px;background:#282a36;overflow:hidden" id="ed"></div>
<div class="a" style="left:270px;top:271px;width:763px;height:22px;background:#303144"></div>
<div class="ln a" style="left:196px;top:95.5px;width:40px">49
50
51
52
53
54
55
56
57
58
59
60
61
62
63
64
65
66
67
68
69
70
71
72
73
74
75
76
77</div>
<div class="code a" style="left:270px;top:95.5px"><div style="height:22px">    cursor<span class="pk">:</span>pointer<span class="pk">;</span></div><div style="height:22px">    display<span class="pk">:</span>inline-block<span class="pk">;</span></div><div style="height:22px"><span class="pk">}</span></div><div style="height:22px"></div><div style="height:22px"><span class="pn">.</span><span class="gr">nav__current, .nav__item:hover</span><span class="cr"> </span><span class="pk">{</span></div><div style="height:22px">    color<span class="pk">:</span>#ffffff<span class="pk">;</span></div><div style="height:22px">    background<span class="pk">:</span>#000<span class="pk">;</span></div><div style="height:22px"><span class="pk">}</span></div><div style="height:22px"></div><div style="height:22px"><span class="cr">article </span><span class="pk">{</span></div><div style="height:22px">    width<span class="pk">:</span>90%<span class="pk">;</span></div><div style="height:22px">    margin<span class="pk">:</span>0 auto<span class="pk">;</span></div><div style="height:22px">    background<span class="pk">:</span>rgba(255,255,255,0.5)<span class="pk">;</span></div><div style="height:22px">    color<span class="pk">:</span>#fff<span class="pk">;</span></div><div style="height:22px">    padding<span class="pk">:</span>5px<span class="pk">;</span></div><div style="height:22px"><span class="pk">}</span></div><div style="height:22px"></div><div style="height:22px"><span class="pn">.</span><span class="gr">popup</span><span class="cr"> </span><span class="pk">{</span></div><div style="height:22px">    position<span class="pk">:</span>fixed<span class="pk">;</span></div><div style="height:22px">    bottom<span class="pk">:</span>50px<span class="pk">;</span></div><div style="height:22px">    right<span class="pk">:</span>calc(50% - 150px)<span class="pk">;</span></div><div style="height:22px">    width<span class="pk">:</span>300px<span class="pk">;</span></div><div style="height:22px">    height<span class="pk">:</span>300px<span class="pk">;</span></div><div style="height:22px">    background<span class="pk">:</span>#fefefe<span class="pk">;</span></div><div style="height:22px">    border<span class="pk">:</span>3px solid #333<span class="pk">;</span></div><div style="height:22px">    box-shadow<span class="pk">:</span> 0 0 10px rgba(0,0,0,0.5)<span class="pk">;</span></div><div style="height:22px">    z-index<span class="pk">:</span>999<span class="pk">;</span></div><div style="height:22px"><span class="pk">}</span></div><div style="height:22px"></div></div>
<div class="a" style="left:262px;top:95px;width:1px;height:55px;background:#bd93f9"></div>
<div class="a" style="left:262px;top:150px;width:6px;height:1px;background:#bd93f9"></div>
<div class="a" style="left:257px;top:189px;width:11px;height:11px;background:#bd93f9"></div>
<div class="a" style="left:262px;top:200px;width:1px;height:60px;background:#bd93f9"></div>
<div class="a" style="left:262px;top:260px;width:6px;height:1px;background:#bd93f9"></div>
<div class="a" style="left:257px;top:299px;width:11px;height:11px;background:#bd93f9"></div>
<div class="a" style="left:262px;top:310px;width:1px;height:126px;background:#bd93f9"></div>
<div class="a" style="left:262px;top:436px;width:6px;height:1px;background:#bd93f9"></div>
<div class="a" style="left:257px;top:475px;width:11px;height:11px;background:#bd93f9"></div>
<div class="a" style="left:262px;top:486px;width:1px;height:214px;background:#bd93f9"></div>
<div class="a" style="left:262px;top:700px;width:6px;height:1px;background:#bd93f9"></div>
<div class="a" style="left:1059px;top:67px;width:220px;height:18px;border:1px solid #000;background:#f4f4f4"></div>
<div class="t" style="left:1061px;top:71px;font-size:10.6px;color:#000">Карта Документа</div>
<div class="a" style="left:1265px;top:70px;width:12px;height:12px;background:#ece9d8;border:1px solid;border-color:#fff #8a8670 #8a8670 #fff"></div>
<svg class="a" style="left:1265px;top:70px" width="12" height="12"><path d="M3 3 L9 9 M9 3 L3 9" stroke="#404040" stroke-width="1.6"/></svg>
<div class="a" style="left:1059px;top:87px;width:220px;height:649px;background:#50535e;box-shadow:inset 1px 1px 0 #b0b0b0,inset 2px 2px 0 #707070;border-bottom:1px solid #fff"></div>
<div class="a" style="left:1061px;top:279px;width:218px;height:116px;background:#553a2c"></div>
<div class="a dm" style="left:1062px;top:90.5px"><i>body {</i>
	margin<i>:</i> 0<i>;</i>
	font-size<i>:</i> 16px<i>;</i>
	font-family<i>:</i> Arial<i>;</i>
	padding<i>:</i> 0<i>;</i>
<i>}</i>

<b>.wrapper</b> <i>{</i>
	width<i>:</i> 100%<i>;</i>
	position<i>:</i> absolute<i>;</i>
	z-index<i>:</i> 0<i>;</i>
<i>}</i>

<b>#background_ship</b> <i>{</i>
	position<i>:</i> fixed<i>;</i>
	z-index<i>:</i> 0<i>;</i>
	background<i>:</i> #000<i>;</i>
	width<i>:</i> 100%<i>;</i>
	height<i>:</i> 100%<i>;</i>
<i>}</i>

<b>#battle_ship</b> <i>{</i>
	background<i>:</i> #fff<i>;</i>
<i>}</i>

<i>h1 {</i>
	margin<i>:</i> 0<i>;</i>

<i>}</i>

<i>header, footer {</i>
	background<i>:</i> #000<i>;</i>
	color<i>:</i> #ffffff<i>;</i>

	height<i>:</i> 100px<i>;</i>
	margin<i>:</i> 0<i>;</i>
	padding<i>:</i> 5px<i>;</i>
<i>}</i>

<i>nav {</i>
	border-bottom<i>:</i> 3px solid #000<i>;</i>
	background<i>:</i> #ffffff<i>;</i>
<i>}</i>

<b>.nav__item</b> <i>{</i>
	background<i>:</i> #ffffff<i>;</i>
	color<i>:</i> #000<i>;</i>
	padding<i>:</i> 5px<i>;</i>
	cursor<i>:</i> pointer<i>;</i>
	display<i>:</i> inline-block<i>;</i>
<i>}</i>

<b>.nav__c:hover, .nav__item:hover</b> <i>{</i>
	color<i>:</i> #ffffff<i>;</i>
	background<i>:</i> #000<i>;</i>
<i>}</i>

<i>article {</i>
	width<i>:</i> 90%<i>;</i>
	margin<i>:</i> 0 auto<i>;</i>
	background<i>:</i> rgba(255,255,255,0.5)<i>;</i>
	color<i>:</i> #fff<i>;</i>
	padding<i>:</i> 5px<i>;</i>
<i>}</i>

<b>.popup</b> <i>{</i>
	position<i>:</i> fixed<i>;</i>
	bottom<i>:</i> 50px<i>;</i>
	right<i>:</i> calc(50%-150px)<i>;</i>
	width<i>:</i> 300px<i>;</i>
	height<i>:</i> 300px<i>;</i>
	background<i>:</i> #fefefe<i>;</i>
	border<i>:</i> 3px solid #333<i>;</i>
	box-shadow<i>:</i> 0 0 10px rgba(0,0,0,0.5)<i>;</i>
	z-index<i>:</i> 999<i>;</i>
<i>}</i>

<b>.popup__close</b> <i>{</i>
	padding<i>:</i> 5px<i>;</i>
	font-size<i>:</i> 20px<i>;</i>
<i>}</i>

<b>.popup__text</b> <i>{</i>
	cursor<i>:</i> pointer<i>;</i>
	text-align<i>:</i> right<i>;</i>
	padding<i>:</i> 5px<i>;</i>
	background<i>:</i> #000<i>;</i>
	color<i>:</i> #ffffff<i>;</i>
<i>}</i>

<b>.card__button</b> <i>{</i>
	text-decoration<i>:</i> none<i>;</i>
	cursor<i>:</i> pointer<i>;</i>
<i>}</i>

<b>.card__link, .card__button:hover</b> <i>{</i>
	text-decoration<i>:</i> underline<i>;</i>
<i>}</i>

<i>button, input[type=button] {</i>
	cursor<i>:</i> pointer<i>;</i>
<i>}</i>

<i>input[type=button]:hover, button:hover, .button:hover {</i>
	background<i>:</i> #000<i>;</i>
	color<i>:</i> #ffffff<i>;</i>
<i>}</i>

<b>.button, button, input</b> <i>{</i>
	padding<i>:</i> 5px<i>;</i>
	text-align<i>:</i> center<i>;</i>
	background<i>:</i> #ffffff<i>;</i>
	color<i>:</i> #000<i>;</i>
	border<i>:</i> 3px solid #000<i>;</i>
	font-size<i>:</i> 16px<i>;</i>
	margin<i>:</i> 5px<i>;</i>
	cursor<i>:</i> pointer<i>;</i>

<i>}</i></div>
<div class="a" style="left:0;top:737px;width:1279px;height:22px;background:#f0edeb;border-top:1px solid #fff;border-left:1px solid #fff"></div>
<div class="t" style="left:3px;top:745px;font-size:11px">Cascade Style Sheets File</div>
<svg class="a" style="left:1px;top:2px" width="17" height="17"><rect x="0.5" y="2.5" width="13" height="13" fill="#fff" stroke="#d8d8d8"/><path d="M1 1.5 H13" stroke="#888" stroke-dasharray="1 1"/><rect x="2" y="8" width="10" height="6" fill="#3aa820"/><rect x="2" y="5" width="10" height="3" fill="#c8e890"/><path d="M15.5 1 L8 13" stroke="#f0a020" stroke-width="2.2"/><path d="M15.5 1 L14.5 2.5" stroke="#e02020" stroke-width="2.2"/></svg>
<div class="a" style="left:1173px;top:-3px;width:105px;height:21px;border:1px solid #6a6a6a;border-radius:0 0 6px 6px;background:#202020;box-shadow:inset 0 0 0 1px #111"></div>
<div class="a" style="left:1202px;top:0;width:2px;height:17px;background:#5a5a5a;border-left:1px solid #111"></div>
<div class="a" style="left:1229px;top:0;width:2px;height:17px;background:#5a5a5a;border-left:1px solid #111"></div>
<div class="a" style="left:1184px;top:8px;width:10px;height:4px;background:#e8e8e8"></div>
<div class="a" style="left:1212px;top:3px;width:8px;height:8px;border:1px solid #e0e0e0;border-left:none;border-bottom:none"></div>
<div class="a" style="left:1210px;top:5px;width:9px;height:8px;border:2px solid #f0f0f0;border-top-width:2px"></div>
<svg class="a" style="left:1247px;top:3px" width="11" height="10"><path d="M1.5 1.5 L9.5 8.5 M9.5 1.5 L1.5 8.5" stroke="#f0f0f0" stroke-width="2.6"/></svg>
<div class="a" style="left:540px;top:740px;width:1px;height:19px;background:#d5d2ce"></div>
<div class="a" style="left:541px;top:740px;width:1px;height:19px;background:#ffffff"></div>
<div class="a" style="left:740px;top:740px;width:1px;height:19px;background:#d5d2ce"></div>
<div class="a" style="left:741px;top:740px;width:1px;height:19px;background:#ffffff"></div>
<div class="a" style="left:999px;top:740px;width:1px;height:19px;background:#d5d2ce"></div>
<div class="a" style="left:1000px;top:740px;width:1px;height:19px;background:#ffffff"></div>
<div class="a" style="left:1109px;top:740px;width:1px;height:19px;background:#d5d2ce"></div>
<div class="a" style="left:1110px;top:740px;width:1px;height:19px;background:#ffffff"></div>
<div class="a" style="left:1229px;top:740px;width:1px;height:19px;background:#d5d2ce"></div>
<div class="a" style="left:1230px;top:740px;width:1px;height:19px;background:#ffffff"></div>
<div class="a" style="left:1259px;top:740px;width:1px;height:19px;background:#d5d2ce"></div>
<div class="a" style="left:1260px;top:740px;width:1px;height:19px;background:#ffffff"></div>
<div class="t" style="left:544px;top:745px;font-size:11.2px;color:#000">length : 1 618&nbsp;&nbsp;&nbsp;&nbsp;lines : 119</div>
<div class="t" style="left:744px;top:745px;font-size:11.2px;color:#000">Ln : 57&nbsp;&nbsp;&nbsp;&nbsp;Col : 1&nbsp;&nbsp;&nbsp;&nbsp;Sel : 0 | 0</div>
<div class="t" style="left:1004px;top:745px;font-size:11.2px;color:#000">Windows (CR LF)</div>
<div class="t" style="left:1114px;top:745px;font-size:11.2px;color:#000">UTF-8</div>
<div class="t" style="left:1233px;top:745px;font-size:11.2px;color:#000">INS</div>
<div class="a" style="left:1035px;top:95px;width:17px;height:638px;background:linear-gradient(90deg,#e4e4e4,#f2f2f2 40%,#f4f4f4 60%,#e8e8e8);border-left:1px solid #fff"></div>
<svg class="a" style="left:1040px;top:101px" width="8" height="5"><path d="M0 4.5 L4 0.5 L8 4.5 Z" fill="#404040"/></svg>
<svg class="a" style="left:1040px;top:723px" width="8" height="5"><path d="M0 0.5 L4 4.5 L8 0.5 Z" fill="#404040"/></svg>
<div class="a" style="left:1035px;top:357px;width:15px;height:144px;border:1px solid #9a9a9a;border-radius:2px;background:linear-gradient(90deg,#f4f4f4,#e4e4e4 45%,#d8d8d8 55%,#e8e8e8);box-shadow:inset 0 0 0 1px #fff"></div>
<div class="a" style="left:1038px;top:425px;width:8px;height:1px;background:#6a6a6a"></div>
<div class="a" style="left:1038px;top:427px;width:8px;height:1px;background:#6a6a6a"></div>
<div class="a" style="left:1038px;top:429px;width:8px;height:1px;background:#6a6a6a"></div>
<div class="a" style="left:1038px;top:431px;width:8px;height:1px;background:#6a6a6a"></div>
<div class="a" style="left:340px;top:170px;width:600px;height:420px;border:1px solid #101010;border-radius:7px 7px 5px 5px;overflow:hidden;background:#000"><div class="a" style="left:0;top:0;width:598px;height:418px;border:1px solid #bcbcbc;border-radius:6px 6px 4px 4px;background:linear-gradient(#6e6e6e 0,#4c4c4c 30px,#5a5a5a 60px,#9a9a9a 110px,#b8b8b8 122px,#000 124px,#000 100%)"></div><div class="a" style="left:1px;top:1px;width:595px;height:27px;background:linear-gradient(90deg,#6a6a6a 0,#4a4a4a 120px,#000 230px,#000 440px,#3a3a3a 520px,#5a5a5a 595px)"></div><div class="a" style="left:12px;top:4px;width:200px;height:21px;border-radius:10px;background:#8e8e8e;filter:blur(6px)"></div><div class="a" style="left:0;top:0;width:597px;height:1px;background:linear-gradient(90deg,#c8c8c8,#888 300px,#999)"></div></div>
<div class="a" style="left:348px;top:177px;width:16px;height:16px;border-radius:50%;background:radial-gradient(circle at 50% 30%,#1fc47a 0,#0a9a55 60%,#07703d 100%)"></div>
<div class="t" style="left:351.5px;top:178.5px;font-size:13px;font-weight:bold;color:#fff">S</div>
<div class="t" style="left:370px;top:179px;font-size:12px;color:#000">Настройки [Профиль: Default]</div>
<div class="a" style="left:829px;top:170px;width:105px;height:20px;border:1px solid #d0d0d0;border-top:none;border-radius:0 0 5px 5px;background:#222"></div>
<div class="a" style="left:830px;top:171px;width:28px;height:18px;border-radius:0 0 0 4px;background:linear-gradient(#a0a0a0 0,#6a6a6a 8px,#3a3a44 9px,#4a4a55 18px);border-right:1px solid #999"></div>
<div class="a" style="left:858px;top:171px;width:28px;height:18px;background:linear-gradient(#9a9a9a 0,#6a6a6a 8px,#3a3a44 9px,#4a4a55 18px);border-right:1px solid #ccc"></div>
<div class="a" style="left:886px;top:171px;width:47px;height:18px;border-radius:0 0 4px 0;background:linear-gradient(#d88878 0,#c8604a 7px,#b8321a 9px,#c04a30 18px)"></div>
<div class="a" style="left:840px;top:180px;width:10px;height:4px;background:#fff;box-shadow:0 0 1px #333"></div>
<div class="a" style="left:867px;top:175px;width:10px;height:8px;border:2px solid #999;border-top-width:3px"></div>
<svg class="a" style="left:903px;top:175px" width="14" height="11" viewBox="0 0 14 11"><path d="M2.5 1.5 L11.5 9.5 M11.5 1.5 L2.5 9.5" stroke="#3a3a4a" stroke-width="4" stroke-linecap="round"/><path d="M2.5 1.5 L11.5 9.5 M11.5 1.5 L2.5 9.5" stroke="#fff" stroke-width="2.2"/></svg>
<div class="a" style="left:346px;top:198px;width:588px;height:386px;border:1px solid #b8b8b8;border-right-color:#888;border-bottom-color:#888"></div>
<div class="a" style="left:347px;top:199px;width:586px;height:384px;border:1px solid #000;background:#f0f0f0"></div>
<div class="a" style="left:358px;top:210px;width:95px;height:19px;border:1px solid #898c95;background:linear-gradient(#f2f2f2 0,#ebebeb 45%,#dddddd 50%,#cfcfcf 100%);box-shadow:inset 1px 1px 0 #fff"></div>
<div class="t" style="left:358px;top:215px;width:95px;text-align:center;font-size:11px">Домены</div>
<div class="a" style="left:452px;top:210px;width:93px;height:19px;border:1px solid #898c95;background:linear-gradient(#f2f2f2 0,#ebebeb 45%,#dddddd 50%,#cfcfcf 100%);box-shadow:inset 1px 1px 0 #fff"></div>
<div class="t" style="left:452px;top:215px;width:93px;text-align:center;font-size:11px">Алиасы</div>
<div class="a" style="left:544px;top:210px;width:169px;height:19px;border:1px solid #898c95;background:linear-gradient(#f2f2f2 0,#ebebeb 45%,#dddddd 50%,#cfcfcf 100%);box-shadow:inset 1px 1px 0 #fff"></div>
<div class="t" style="left:544px;top:215px;width:169px;text-align:center;font-size:11px">Планировщик заданий</div>
<div class="a" style="left:712px;top:210px;width:89px;height:19px;border:1px solid #898c95;background:linear-gradient(#f2f2f2 0,#ebebeb 45%,#dddddd 50%,#cfcfcf 100%);box-shadow:inset 1px 1px 0 #fff"></div>
<div class="t" style="left:712px;top:215px;width:89px;text-align:center;font-size:11px">Разное</div>
<div class="a" style="left:800px;top:210px;width:122px;height:19px;border:1px solid #898c95;background:linear-gradient(#f2f2f2 0,#ebebeb 45%,#dddddd 50%,#cfcfcf 100%);box-shadow:inset 1px 1px 0 #fff"></div>
<div class="t" style="left:800px;top:215px;width:122px;text-align:center;font-size:11px">Автозагрузка</div>
<div class="a" style="left:356px;top:246px;width:567px;height:292px;border:1px solid #898c95;background:#fff;z-index:1"></div>
<div class="a" style="left:358px;top:228px;width:79px;height:19px;border:1px solid #898c95;background:linear-gradient(#f2f2f2 0,#ebebeb 45%,#dddddd 50%,#cfcfcf 100%);box-shadow:inset 1px 1px 0 #fff"></div>
<div class="t" style="left:358px;top:233px;width:79px;text-align:center;font-size:11px">Основные</div>
<div class="a" style="left:436px;top:228px;width:63px;height:19px;border:1px solid #898c95;background:linear-gradient(#f2f2f2 0,#ebebeb 45%,#dddddd 50%,#cfcfcf 100%);box-shadow:inset 1px 1px 0 #fff"></div>
<div class="t" style="left:436px;top:233px;width:63px;text-align:center;font-size:11px">Сервер</div>
<div class="a" style="left:498px;top:226px;width:71px;height:21px;border:1px solid #898c95;border-bottom:none;background:#fff;z-index:2"></div>
<div class="t" style="left:498px;top:231px;width:71px;text-align:center;font-size:11px;z-index:3">Модули</div>
<div class="a" style="left:568px;top:228px;width:56px;height:19px;border:1px solid #898c95;background:linear-gradient(#f2f2f2 0,#ebebeb 45%,#dddddd 50%,#cfcfcf 100%);box-shadow:inset 1px 1px 0 #fff"></div>
<div class="t" style="left:568px;top:233px;width:56px;text-align:center;font-size:11px">Меню</div>
<div class="a" style="left:623px;top:228px;width:84px;height:19px;border:1px solid #898c95;background:linear-gradient(#f2f2f2 0,#ebebeb 45%,#dddddd 50%,#cfcfcf 100%);box-shadow:inset 1px 1px 0 #fff"></div>
<div class="t" style="left:623px;top:233px;width:84px;text-align:center;font-size:11px">Кодировки</div>
<div class="a" style="left:706px;top:228px;width:84px;height:19px;border:1px solid #898c95;background:linear-gradient(#f2f2f2 0,#ebebeb 45%,#dddddd 50%,#cfcfcf 100%);box-shadow:inset 1px 1px 0 #fff"></div>
<div class="t" style="left:706px;top:233px;width:84px;text-align:center;font-size:11px">FTP сервер</div>
<div class="a" style="left:789px;top:228px;width:59px;height:19px;border:1px solid #898c95;background:linear-gradient(#f2f2f2 0,#ebebeb 45%,#dddddd 50%,#cfcfcf 100%);box-shadow:inset 1px 1px 0 #fff"></div>
<div class="t" style="left:789px;top:233px;width:59px;text-align:center;font-size:11px">Почта</div>
<div class="a" style="left:847px;top:228px;width:75px;height:19px;border:1px solid #898c95;background:linear-gradient(#f2f2f2 0,#ebebeb 45%,#dddddd 50%,#cfcfcf 100%);box-shadow:inset 1px 1px 0 #fff"></div>
<div class="t" style="left:847px;top:233px;width:75px;text-align:center;font-size:11px">Закладки</div>
<div class="t" style="left:375.5px;top:268px;font-size:11px;z-index:3">HTTP</div>
<div class="a" style="left:376px;top:283px;width:130px;height:21px;border:1px solid #707070;border-radius:3px;background:linear-gradient(#f2f2f2 0,#ebebeb 45%,#dddddd 50%,#cfcfcf 100%);box-shadow:inset 0 0 0 1px #fff;z-index:2"></div>
<div class="t" style="left:379.5px;top:288.5px;font-size:11px;z-index:3">Apache-PHP-7</div>
<svg class="a" style="left:493.5px;top:292px;z-index:3" width="8" height="5"><path d="M0 0 H7 L3.5 4 Z" fill="#000"/></svg>
<div class="t" style="left:645.5px;top:268px;font-size:11px;z-index:3">MongoDB</div>
<div class="a" style="left:646px;top:283px;width:130px;height:21px;border:1px solid #707070;border-radius:3px;background:linear-gradient(#f2f2f2 0,#ebebeb 45%,#dddddd 50%,#cfcfcf 100%);box-shadow:inset 0 0 0 1px #fff;z-index:2"></div>
<div class="t" style="left:649.5px;top:288.5px;font-size:11px;z-index:3">Не использовать</div>
<svg class="a" style="left:763.5px;top:292px;z-index:3" width="8" height="5"><path d="M0 0 H7 L3.5 4 Z" fill="#000"/></svg>
<div class="t" style="left:375.5px;top:314px;font-size:11px;z-index:3">PHP</div>
<div class="a" style="left:376px;top:329px;width:130px;height:21px;border:1px solid #707070;border-radius:3px;background:linear-gradient(#f2f2f2 0,#ebebeb 45%,#dddddd 50%,#cfcfcf 100%);box-shadow:inset 0 0 0 1px #fff;z-index:2"></div>
<div class="t" style="left:379.5px;top:334.5px;font-size:11px;z-index:3">PHP-7.2</div>
<svg class="a" style="left:493.5px;top:338px;z-index:3" width="8" height="5"><path d="M0 0 H7 L3.5 4 Z" fill="#000"/></svg>
<div class="t" style="left:645.5px;top:314px;font-size:11px;z-index:3">Memcached</div>
<div class="a" style="left:646px;top:329px;width:130px;height:21px;border:1px solid #707070;border-radius:3px;background:linear-gradient(#f2f2f2 0,#ebebeb 45%,#dddddd 50%,#cfcfcf 100%);box-shadow:inset 0 0 0 1px #fff;z-index:2"></div>
<div class="t" style="left:649.5px;top:334.5px;font-size:11px;z-index:3">Не использовать</div>
<svg class="a" style="left:763.5px;top:338px;z-index:3" width="8" height="5"><path d="M0 0 H7 L3.5 4 Z" fill="#000"/></svg>
<div class="t" style="left:375.5px;top:360px;font-size:11px;z-index:3">MySQL / MariaDB</div>
<div class="a" style="left:376px;top:375px;width:130px;height:21px;border:1px solid #707070;border-radius:3px;background:linear-gradient(#f2f2f2 0,#ebebeb 45%,#dddddd 50%,#cfcfcf 100%);box-shadow:inset 0 0 0 1px #fff;z-index:2"></div>
<div class="t" style="left:379.5px;top:380.5px;font-size:11px;z-index:3">MySQL-5.6</div>
<svg class="a" style="left:493.5px;top:384px;z-index:3" width="8" height="5"><path d="M0 0 H7 L3.5 4 Z" fill="#000"/></svg>
<div class="t" style="left:645.5px;top:360px;font-size:11px;z-index:3">Redis</div>
<div class="a" style="left:646px;top:375px;width:130px;height:21px;border:1px solid #707070;border-radius:3px;background:linear-gradient(#f2f2f2 0,#ebebeb 45%,#dddddd 50%,#cfcfcf 100%);box-shadow:inset 0 0 0 1px #fff;z-index:2"></div>
<div class="t" style="left:649.5px;top:380.5px;font-size:11px;z-index:3">Не использовать</div>
<svg class="a" style="left:763.5px;top:384px;z-index:3" width="8" height="5"><path d="M0 0 H7 L3.5 4 Z" fill="#000"/></svg>
<div class="t" style="left:375.5px;top:406px;font-size:11px;z-index:3">PostgreSQL</div>
<div class="a" style="left:376px;top:421px;width:130px;height:21px;border:1px solid #707070;border-radius:3px;background:linear-gradient(#f2f2f2 0,#ebebeb 45%,#dddddd 50%,#cfcfcf 100%);box-shadow:inset 0 0 0 1px #fff;z-index:2"></div>
<div class="t" style="left:379.5px;top:426.5px;font-size:11px;z-index:3">Не использовать</div>
<svg class="a" style="left:493.5px;top:430px;z-index:3" width="8" height="5"><path d="M0 0 H7 L3.5 4 Z" fill="#000"/></svg>
<div class="t" style="left:645.5px;top:406px;font-size:11px;z-index:3">DNS</div>
<div class="a" style="left:646px;top:421px;width:130px;height:21px;border:1px solid #707070;border-radius:3px;background:linear-gradient(#f2f2f2 0,#ebebeb 45%,#dddddd 50%,#cfcfcf 100%);box-shadow:inset 0 0 0 1px #fff;z-index:2"></div>
<div class="t" style="left:649.5px;top:426.5px;font-size:11px;z-index:3">Не использовать</div>
<svg class="a" style="left:763.5px;top:430px;z-index:3" width="8" height="5"><path d="M0 0 H7 L3.5 4 Z" fill="#000"/></svg>
<div class="a" style="left:516px;top:287px;width:13px;height:13px;border:1px solid #8f8f8f;background:#fff;z-index:2"><div class="a" style="left:2px;top:2px;width:7px;height:7px;background:linear-gradient(135deg,#dcdcdc,#fdfdfd)"></div></div>
<svg class="a" style="left:518px;top:288px;z-index:3" width="10" height="11"><path d="M1.5 6 L4 9 L8.5 1.5" stroke="#4a5fa8" stroke-width="2" fill="none"/></svg>
<div class="t" style="left:531px;top:289px;font-size:11px;z-index:3">Вести лог запросов</div>
<div class="t" style="left:516px;top:335px;font-size:11px;color:#a0a0a0;z-index:3">Нет лога запросов</div>
<div class="a" style="left:516px;top:379px;width:13px;height:13px;border:1px solid #8f8f8f;background:#fff;z-index:2"><div class="a" style="left:2px;top:2px;width:7px;height:7px;background:linear-gradient(135deg,#dcdcdc,#fdfdfd)"></div></div>
<div class="t" style="left:531px;top:381px;font-size:11px;z-index:3">Вести лог запросов</div>
<div class="a" style="left:516px;top:425px;width:13px;height:13px;border:1px solid #c4c4c4;background:#fff;z-index:2"><div class="a" style="left:2px;top:2px;width:7px;height:7px;background:linear-gradient(135deg,#f4f4f4,#fcfcfc)"></div></div>
<div class="t" style="left:531px;top:427px;font-size:11px;color:#a0a0a0;z-index:3">Вести лог запросов</div>
<div class="a" style="left:786px;top:287px;width:13px;height:13px;border:1px solid #c4c4c4;background:#fff;z-index:2"><div class="a" style="left:2px;top:2px;width:7px;height:7px;background:linear-gradient(135deg,#f4f4f4,#fcfcfc)"></div></div>
<div class="t" style="left:801px;top:289px;font-size:11px;color:#a0a0a0;z-index:3">Вести лог запросов</div>
<div class="a" style="left:786px;top:333px;width:13px;height:13px;border:1px solid #c4c4c4;background:#fff;z-index:2"><div class="a" style="left:2px;top:2px;width:7px;height:7px;background:linear-gradient(135deg,#f4f4f4,#fcfcfc)"></div></div>
<div class="t" style="left:801px;top:335px;font-size:11px;color:#a0a0a0;z-index:3">Вести лог запросов</div>
<div class="a" style="left:786px;top:425px;width:13px;height:13px;border:1px solid #c4c4c4;background:#fff;z-index:2"><div class="a" style="left:2px;top:2px;width:7px;height:7px;background:linear-gradient(135deg,#f4f4f4,#fcfcfc)"></div></div>
<div class="t" style="left:801px;top:427px;font-size:11px;color:#a0a0a0;z-index:3">Вести лог запросов</div>
<div class="t" style="left:786px;top:381px;font-size:11px;color:#a0a0a0;z-index:3">Нет лога запросов</div>
<div class="a" style="left:376px;top:466px;width:527px;height:52px;border:1px solid #d5dfe5;border-radius:3px;box-shadow:inset 1px 1px 0 #fff;z-index:2"></div>
<div class="t" style="left:383px;top:461px;padding:0 3px;background:#fff;font-size:11px;z-index:3">Информация</div>
<div class="t" style="left:390.5px;top:481px;font-size:11.1px;z-index:3">Внимание! Файлы конфигурации индивидуальны для каждого модуля. Будьте внимательны</div>
<div class="t" style="left:390.5px;top:494px;font-size:11.1px;z-index:3">при переключении версий модулей и отдельно редактируйте настройки каждого из них.</div>
<div class="a" style="left:357px;top:549px;width:121px;height:23px;border:1px solid #707070;border-radius:3px;background:linear-gradient(#f2f2f2 0,#ebebeb 45%,#dddddd 50%,#cfcfcf 100%);box-shadow:inset 0 0 0 1px #fff"></div>
<div class="t" style="left:357px;top:556px;width:121px;text-align:center;font-size:11px">Сбросить настройки</div>
<div class="a" style="left:751px;top:549px;width:82px;height:23px;border:1px solid #707070;border-radius:3px;background:linear-gradient(#f2f2f2 0,#ebebeb 45%,#dddddd 50%,#cfcfcf 100%);box-shadow:inset 0 0 0 1px #fff"></div>
<div class="t" style="left:751px;top:556px;width:82px;text-align:center;font-size:11px">Сохранить</div>
<div class="a" style="left:841px;top:549px;width:82px;height:23px;border:1px solid #707070;border-radius:3px;background:linear-gradient(#f2f2f2 0,#ebebeb 45%,#dddddd 50%,#cfcfcf 100%);box-shadow:inset 0 0 0 1px #fff"></div>
<div class="t" style="left:841px;top:556px;width:82px;text-align:center;font-size:11px">Закрыть</div>
</body></html>
